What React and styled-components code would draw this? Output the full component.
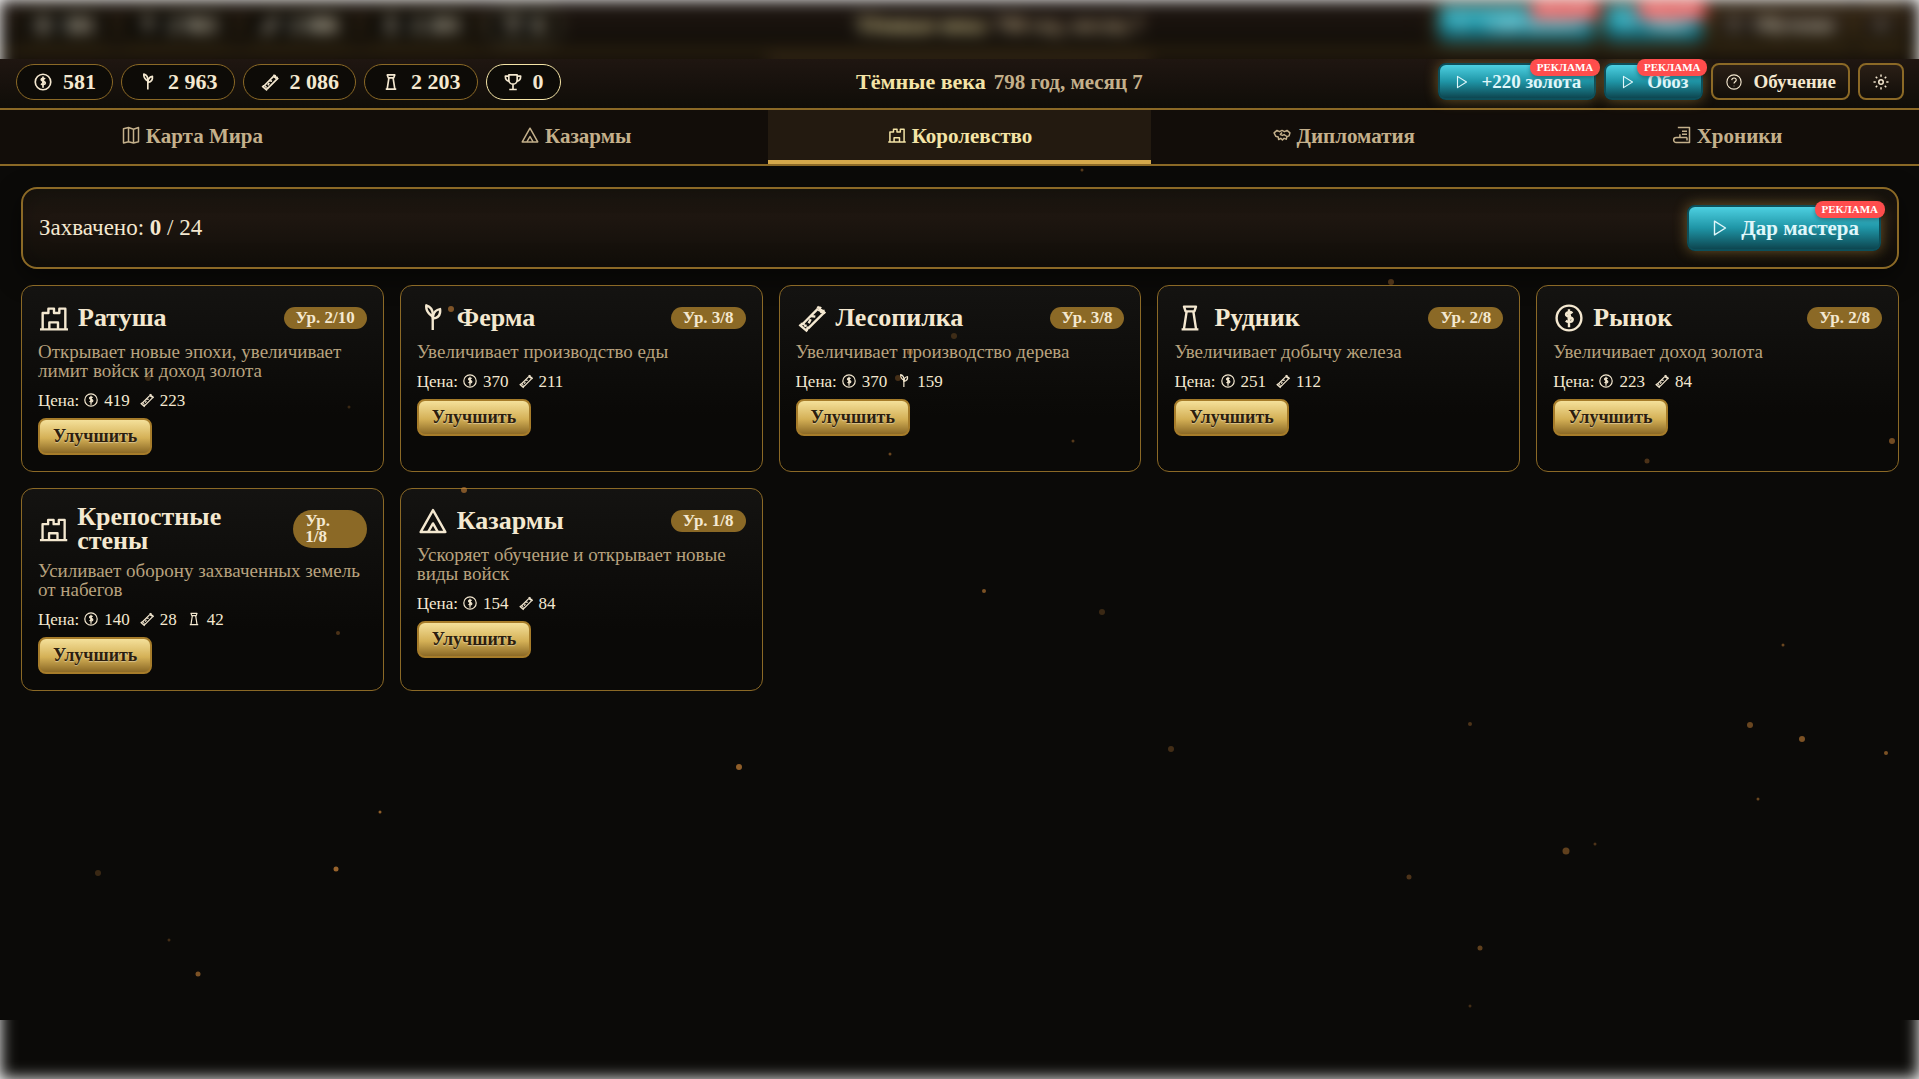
import React from 'react';
import styled, { createGlobalStyle, css } from 'styled-components';

const GlobalStyle = createGlobalStyle`
  * {
    box-sizing: border-box;
  }

  body {
    margin: 0;
    background: #fff;
    color: #f4e8d0;
    font-family: Georgia, 'Liberation Serif', serif;
    overflow-x: hidden;
  }

  button {
    font-family: inherit;
    cursor: pointer;
  }
`;

const Screen = styled.div`
  position: relative;
  display: flex;
  min-height: 100vh;
  padding: 59px 0;
  overflow: hidden;
`;

const Backdrop = styled.div`
  position: absolute;
  inset: 0;
  padding-top: 2px;
  background: #0b0a08;
  filter: blur(8px);
`;

const Game = styled.div`
  position: relative;
  flex: 1;
  min-width: 0;
  display: flex;
  flex-direction: column;
  background: #0b0a08;
  overflow: hidden;
`;

const TopBar = styled.header`
  display: flex;
  justify-content: space-between;
  align-items: center;
  padding: 4px 15px 8px 16px;
  border-bottom: 2px solid #8b6926;
  background: linear-gradient(180deg, #1f1611 0%, #100d08 100%);
`;

const Group = styled.div`
  display: flex;
  align-items: center;
  gap: 8px;
`;

const Pill = styled.div`
  display: flex;
  align-items: center;
  gap: 10px;
  height: 36px;
  padding: 0 16px;
  border: 1px solid ${props => (props.$bright ? '#f4e4a6' : '#8b6926')};
  border-radius: 18px;
  background: #0d0b07;
  font-size: 22px;
  font-weight: bold;
  line-height: 24px;
  white-space: nowrap;
`;

const Era = styled.div`
  display: flex;
  align-items: center;
  gap: 8px;
  font-size: 22px;
  font-weight: bold;
  line-height: 24px;
  color: #f4e4a6;
  white-space: nowrap;
`;

const DateText = styled.span`
  font-size: 21px;
  color: #c4b08b;
`;

const DarkButton = styled.button`
  display: flex;
  align-items: center;
  gap: 10px;
  height: 37px;
  padding: 0 12px;
  border: 2px solid #8b6926;
  border-radius: 8px;
  background: linear-gradient(180deg, #2a1f16 0%, #120e09 100%);
  color: #f4e8d0;
  font-size: 19px;
  font-weight: bold;
`;

const AdButton = styled.button`
  position: relative;
  display: flex;
  align-items: center;
  gap: 10px;
  height: ${props => (props.$large ? '46px' : '37px')};
  padding: ${props => (props.$large ? '0 20px' : '0 13px')};
  border: 2px solid #0d4f5a;
  border-radius: 8px;
  background: linear-gradient(180deg, #4dd0e1 0%, #1f95a6 50%, #0d4650 100%);
  box-shadow: 0 0 14px rgba(212, 168, 75, 0.45);
  color: #e0f7fa;
  font-size: ${props => (props.$large ? '21px' : '19px')};
  font-weight: bold;
  white-space: nowrap;
`;

const AdBadge = styled.span`
  position: absolute;
  top: -6px;
  right: -6px;
  padding: 0 7px;
  border-radius: 8px;
  background: #ff4d4d;
  box-shadow: 0 2px 4px rgba(0, 0, 0, 0.3);
  color: #fff;
  font-size: 11px;
  line-height: 17px;
`;

const Tabs = styled.nav`
  display: grid;
  grid-template-columns: repeat(5, 1fr);
  border-bottom: 2px solid #8b6926;
  background: #120d09;
`;

const Tab = styled.button`
  display: flex;
  justify-content: center;
  align-items: center;
  gap: 5px;
  height: 54px;
  padding: 0 0 2px;
  border: 0;
  background: none;
  color: #c4b08b;
  font-size: 21px;
  font-weight: bold;

  ${props => props.$active && css`
    background: #231a10;
    box-shadow: inset 0 -4px #d4a84b;
    color: #f4e4a6;
  `}

  svg {
    margin-bottom: 2px;
  }
`;

const Main = styled.main`
  display: flex;
  flex-direction: column;
  gap: 16px;
  padding: 21px 20px 21px 21px;
`;

const Panel = styled.section`
  display: flex;
  justify-content: space-between;
  align-items: center;
  padding: 16px;
  border: 2px solid #8b6926;
  border-radius: 16px;
  background: linear-gradient(180deg, #18140e 0%, #1e1610 35%, #110e09 100%);
  box-shadow: 0 8px 24px rgba(0, 0, 0, 0.5), inset 0 0 24px rgba(0, 0, 0, 0.2);
  font-size: 23px;
  line-height: 24px;
`;

const Buildings = styled.section`
  display: grid;
  grid-template-columns: repeat(5, minmax(0, 1fr));
  gap: 16px;
`;

const Card = styled.article`
  display: flex;
  flex-direction: column;
  align-items: flex-start;
  gap: 8px;
  padding: 16px;
  border: 1px solid #8b6926;
  border-radius: 12px;
  background: linear-gradient(180deg, #141311 0%, #0a0907 70%);
`;

const CardHead = styled.div`
  display: flex;
  justify-content: space-between;
  align-items: center;
  width: 100%;
`;

const CardName = styled.div`
  display: flex;
  align-items: center;
  gap: 8px;
`;

const CardTitle = styled.h3`
  margin: 0;
  font-size: 26px;
  line-height: 24px;
`;

const Level = styled.span`
  padding: 3px 12px;
  border-radius: 19px;
  background: #8b6926;
  font-size: 17px;
  font-weight: bold;
  line-height: 16px;
`;

const Description = styled.p`
  margin: 0;
  color: #b8a27e;
  font-size: 19px;
  line-height: 19px;
`;

const Cost = styled.div`
  display: flex;
  align-items: center;
  gap: 4px;
  padding-top: 4px;
  font-size: 17px;
  line-height: 18px;
`;

const Price = styled.span`
  display: flex;
  align-items: center;
  gap: 5px;
  margin-right: 5px;

  svg {
    margin-bottom: 2px;
  }
`;

const UpgradeButton = styled.button`
  height: 37px;
  padding: 0 13px;
  border: 2px solid #a67c2a;
  border-radius: 8px;
  background: linear-gradient(180deg, #f4e09a 0%, #d4b056 55%, #8b6926 100%);
  color: #2c1e0e;
  font-size: 18px;
  font-weight: bold;
  text-shadow: 0 1px 1px rgba(255, 255, 255, 0.4);
`;

const Ember = styled.span`
  position: absolute;
  border-radius: 50%;
  background: #c88238;
  transform: translate(-50%, -50%);
  pointer-events: none;
`;

const glyphs = {
  coin: (
    <>
      <circle cx="12" cy="12" r="9.3" />
      <path d="M12 5.5v13.5M14.6 8.3c-1.6-1.3-4.8-1-4.8 1 0 2.3 5 1.4 5 3.8 0 2.1-3.5 2.4-5.2 1" />
      <path d="M10.3 8.5h3.2M11 12.5h3M11 10.500h2.500" />
    </>
  ),
  wheat: (
    <>
      <path d="M11.8 21V9.5" />
      <path d="M11.8 11C8 8.5 6.5 6 7 2.5c3.5 1 5.2 4 4.800 8.5z" />
      <path d="M12 12.5c-.2-4 1.5-6.5 5.3-7.2.5 4-1.3 6.600-5.3 7.2z" />
    </>
  ),
  wood: (
    <>
      <path d="M5 16.5 16.500 5M9 20 21 8" />
      <path d="M16 3.500 22 8.500M2.500 17l6 5M3.500 16.500h3M18.500 3.500l-1.500 3.500M8 21.500l1-3M21.500 6.500l-3.500 1" />
      <path d="m11 10.500 3.500.5M9.500 16l1.500-3M6 17.500l2 .5" />
    </>
  ),
  iron: (
    <>
      <path d="M7.5 3.5h9L15.3 7H8.7z" />
      <path d="M9.5 7l-2 13M14.5 7l2 13M5.7 20.5h12.6" />
    </>
  ),
  trophy: (
    <>
      <path d="M7 3.5h10v6a5 5 0 0 1-10 0z" />
      <path d="M7 5H2.8c0 3.5 1.5 5.5 4.7 6M17 5h4.2c0 3.5-1.5 5.5-4.7 6M12 15v6M7.5 21h9" />
    </>
  ),
  castle: (
    <>
      <path d="M1.5 20.5h21M3.5 20.5V8.3h4.3V5H12v3.3h4V5h4.5v15.5" />
      <path d="M8.5 20.5v-5.2H15v5.2" />
    </>
  ),
  tent: (
    <>
      <path d="M12 3.8l9.3 16.500H2.7z" />
      <path d="m8.3 20.3 3.7-6.5 3.7 6.5" />
    </>
  ),
  map: (
    <path d="M3 4.5 9 3l6 2 6-2v17l-6 1.500-6-1.500-6 1.500zM9 3v17M15 5v16.500" />
  ),
  pact: (
    <path d="M2.500 9.500 6 6.500l3 1.500 3-1.500L15 8l3-1.500 3.500 3-1 3.500-2.500 1-1 3-2.500-1-2 2-2-2-2.500 1.500-.5-3-3-1zM12 9l-2 2.500 2.500 1 2-1 3 2" />
  ),
  scroll: (
    <>
      <path d="M7 3h14v18H5a2.8 2.8 0 0 1 0-6h13" />
      <path d="M12 7.5h6M12 11h6M9.5 11v4M18 15v3.500" />
    </>
  ),
  play: <path d="M6 4.5v15L18 12z" />,
  help: (
    <>
      <circle cx="12" cy="12" r="9.5" />
      <path d="M9 9.5c.2-4 6.3-3.5 6 0-.2 2-3 2.3-3 4.500M12 17v.8" />
    </>
  ),
  gear: (
    <>
      <circle cx="12" cy="12" r="3" />
      <path d="M12 2v3M12 19v3M2 12h3M19 12h3M5 5l2 2M17 17l2 2M5 19l2-2M17 7l2-2" />
    </>
  ),
};

const Icon = ({ name, size = 18, weight = 1.5 }) => (
  <svg
    width={size}
    height={size}
    viewBox="0 0 24 24"
    fill="none"
    stroke="currentColor"
    strokeWidth={weight}
    strokeLinejoin="round"
    aria-hidden="true"
  >
    {glyphs[name]}
  </svg>
);

const resources = [
  { icon: 'coin', value: '581' },
  { icon: 'wheat', value: '2 963' },
  { icon: 'wood', value: '2 086' },
  { icon: 'iron', value: '2 203' },
  { icon: 'trophy', value: '0', bright: true },
];

const tabs = [
  { icon: 'map', label: 'Карта Мира' },
  { icon: 'tent', label: 'Казармы' },
  { icon: 'castle', label: 'Королевство', active: true },
  { icon: 'pact', label: 'Дипломатия' },
  { icon: 'scroll', label: 'Хроники' },
];

const buildings = [
  {
    icon: 'castle',
    name: 'Ратуша',
    level: '2/10',
    text: 'Открывает новые эпохи, увеличивает лимит войск и доход золота',
    cost: [['coin', 419], ['wood', 223]],
  },
  {
    icon: 'wheat',
    name: 'Ферма',
    level: '3/8',
    text: 'Увеличивает производство еды',
    cost: [['coin', 370], ['wood', 211]],
  },
  {
    icon: 'wood',
    name: 'Лесопилка',
    level: '3/8',
    text: 'Увеличивает производство дерева',
    cost: [['coin', 370], ['wheat', 159]],
  },
  {
    icon: 'iron',
    name: 'Рудник',
    level: '2/8',
    text: 'Увеличивает добычу железа',
    cost: [['coin', 251], ['wood', 112]],
  },
  {
    icon: 'coin',
    name: 'Рынок',
    level: '2/8',
    text: 'Увеличивает доход золота',
    cost: [['coin', 223], ['wood', 84]],
  },
  {
    icon: 'castle',
    name: 'Крепостные стены',
    level: '1/8',
    text: 'Усиливает оборону захваченных земель от набегов',
    cost: [['coin', 140], ['wood', 28], ['iron', 42]],
  },
  {
    icon: 'tent',
    name: 'Казармы',
    level: '1/8',
    text: 'Ускоряет обучение и открывает новые виды войск',
    cost: [['coin', 154], ['wood', 84]],
  },
];

// x and y in percent of the game area, diameter in px, opacity
const embers = [
  [23.5, 26, 6, 0.6], [49.7, 28.8, 6, 0.25], [47.4, 30.5, 6, 0.5], [46.8, 33.2, 6, 0.3],
  [7.7, 33.2, 6, 0.25], [18.2, 36.2, 3, 0.25], [56.4, 11.5, 3, 0.4], [72.5, 23.2, 6, 0.35],
  [46.4, 41.1, 3, 0.5], [55.9, 39.7, 3, 0.4], [85.8, 41.8, 5, 0.35], [98.6, 39.7, 6, 0.55],
  [24.2, 44.8, 6, 0.6], [17.6, 59.7, 4, 0.35], [51.3, 55.4, 4, 0.6], [57.4, 57.5, 6, 0.25],
  [92.9, 61, 3, 0.5], [76.6, 69.2, 4, 0.35], [91.2, 69.3, 6, 0.5], [93.9, 70.8, 6, 0.6],
  [98.3, 72.2, 4, 0.6], [61, 71.8, 6, 0.3], [38.5, 73.7, 6, 0.7], [91.6, 77, 3, 0.5],
  [19.8, 78.4, 3, 0.7], [81.6, 82.4, 7, 0.45], [83.1, 81.7, 3, 0.35], [5.1, 84.7, 6, 0.25],
  [17.5, 84.3, 5, 0.75], [73.4, 85.1, 5, 0.35], [77.1, 92.5, 5, 0.45], [8.8, 91.7, 3, 0.3],
  [10.3, 95.2, 5, 0.6], [76.6, 98.5, 3, 0.3],
];

const ResourceBar = () => (
  <TopBar>
    <Group>
      {resources.map(item => (
        <Pill key={item.icon} $bright={item.bright}>
          <Icon name={item.icon} size={20} weight={2} />
          {item.value}
        </Pill>
      ))}
    </Group>
    <Era>
      Тёмные века
      <DateText>798 год, месяц 7</DateText>
    </Era>
    <Group>
      <AdButton>
        <Icon name="play" />
        +220 золота
        <AdBadge>РЕКЛАМА</AdBadge>
      </AdButton>
      <AdButton>
        <Icon name="play" />
        Обоз
        <AdBadge>РЕКЛАМА</AdBadge>
      </AdButton>
      <DarkButton>
        <Icon name="help" />
        Обучение
      </DarkButton>
      <DarkButton aria-label="Настройки">
        <Icon name="gear" weight={2} />
      </DarkButton>
    </Group>
  </TopBar>
);

const TabBar = ({ blank }) => (
  <Tabs>
    {tabs.map(tab => (
      <Tab key={tab.icon} $active={tab.active}>
        {!blank && <Icon name={tab.icon} size={20} weight={1.8} />}
        {!blank && tab.label}
      </Tab>
    ))}
  </Tabs>
);

const BuildingCard = ({ building }) => (
  <Card>
    <CardHead>
      <CardName>
        <Icon name={building.icon} size={32} weight={1.8} />
        <CardTitle>{building.name}</CardTitle>
      </CardName>
      <Level>Ур. {building.level}</Level>
    </CardHead>
    <Description>{building.text}</Description>
    <Cost>
      Цена:
      {building.cost.map(([icon, amount]) => (
        <Price key={icon}>
          <Icon name={icon} size={16} weight={1.8} />
          {amount}
        </Price>
      ))}
    </Cost>
    <UpgradeButton>Улучшить</UpgradeButton>
  </Card>
);

const App = () => {
  return (
    <>
      <GlobalStyle />
      <Screen>
        <Backdrop aria-hidden="true" inert>
          <ResourceBar />
          <TabBar blank />
        </Backdrop>
        <Game>
          <ResourceBar />
          <TabBar />
          <Main>
            <Panel>
              <span>Захвачено: <b>0</b> / 24</span>
              <AdButton $large>
                <Icon name="play" size={22} />
                Дар мастера
                <AdBadge>РЕКЛАМА</AdBadge>
              </AdButton>
            </Panel>
            <Buildings>
              {buildings.map(building => (
                <BuildingCard key={building.name} building={building} />
              ))}
            </Buildings>
          </Main>
          {embers.map(([x, y, size, opacity]) => (
            <Ember
              key={`${x}-${y}`}
              style={{ left: `${x}%`, top: `${y}%`, width: size, height: size, opacity }}
            />
          ))}
        </Game>
      </Screen>
    </>
  );
};

export default App;
